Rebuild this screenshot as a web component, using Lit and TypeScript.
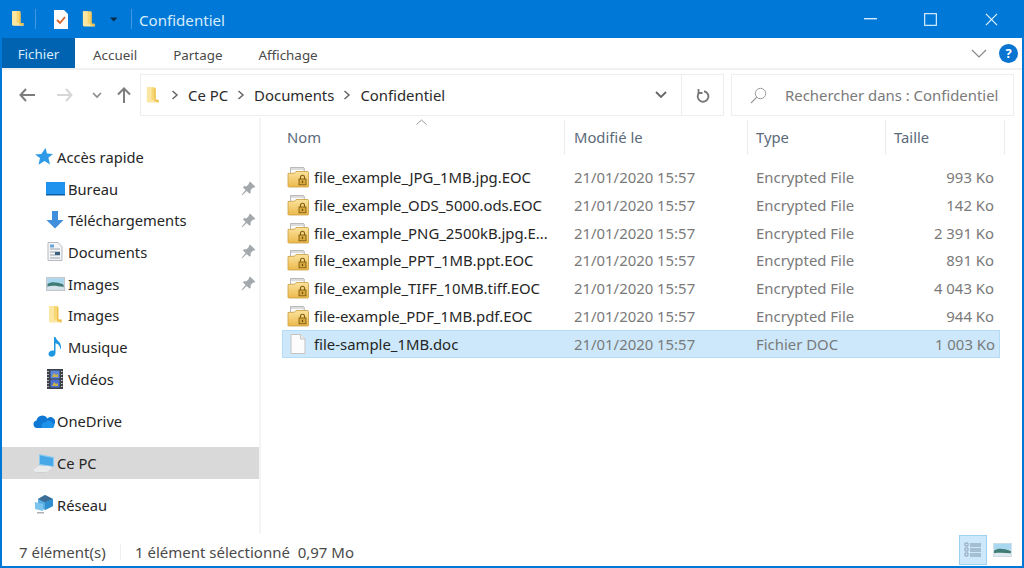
import { LitElement, html, css } from 'lit';
import { customElement } from 'lit/decorators.js';

// small folder standing upright, used in the title bar, address bar and nav pane
const folder = (w = 14, h = 20) => html`<svg width=${w} height=${h} viewBox="0 0 14 20">
  <path d="M1 1h8.500l.8 1v12.500L13.500 17H2l-1-1z" fill="#f7d774"/>
  <path d="M1 1h5v13.500H13.500l.2 3H2l-1-1z" fill="#fbe6a2"/>
  <path d="M9 2.500h1.400V14.500H13.500l.3 3L9 16z" fill="#efc04e"/>
</svg>`;

const pin = html`<svg width="15" height="15" viewBox="0 0 14 14">
  <path d="M8.600 .6l4.800 4.800-1.200 1-.9-.3-2.300 2.300.1 2.400-1.100 1.100-2.600-2.600L1.200 13.400l-.6-.6 3.700-4.300L1.700 5.900l1.100-1.100 2.400.1 2.300-2.300-.3-.9z" fill="#a3a8ac"/>
</svg>`;

const lockedFolder = html`<svg width="22" height="22" viewBox="0 0 22 22">
  <defs><linearGradient id="fy" x1="0" y1="0" x2="0" y2="1"><stop offset="0" stop-color="#fae29c"/><stop offset="1" stop-color="#edb94c"/></linearGradient></defs>
  <path d="M3.500 1.500h13l.8.8V7H3.500z" fill="#dcdcdc" stroke="#a2a2a2" stroke-width=".7"/>
  <path d="M4 4h12.500v3.500H4z" fill="#fafafa"/>
  <path d="M1 7.500l6.700-.3 1.300-1.700h12l.5.8v14.200l-.5.500H1.500l-.5-.5z" fill="url(#fy)" stroke="#c99e3c" stroke-width=".8"/>
  <rect x="12" y="13" width="7" height="5.800" fill="#d9a93c" stroke="#7d5c16" stroke-width=".9"/>
  <path d="M13.500 13v-1.800a2 2 0 0 1 4 0V13" fill="none" stroke="#7d5c16" stroke-width="1.100"/>
  <rect x="14.900" y="14.800" width="1.200" height="2.200" fill="#6f5012"/>
</svg>`;

const docFile = html`<svg width="16" height="20" viewBox="0 0 16 20">
  <path d="M1 .5h9.500l4.500 4.500v14.500H1z" fill="#fcfcfc" stroke="#c4c4c4"/>
  <path d="M10.500 .5v4.500h4.500" fill="#f0f0f0" stroke="#c4c4c4"/>
</svg>`;

const navIcons: Record<string, unknown> = {
  star: html`<svg width="18" height="18" viewBox="0 0 18 18"><path d="M10.500 0l1.500 5.500 6 .5-4.600 3.800 1.600 6.700-5.500-3.500-6 3.700L5 10 0 6.500l6.300-.5z" fill="#2d9be8"/></svg>`,
  desktop: html`<svg width="19" height="14" viewBox="0 0 19 14"><rect width="19" height="13" fill="#1f93ee"/><rect y="12" width="19" height="1.500" fill="#0b5fa5"/></svg>`,
  download: html`<svg width="18" height="18" viewBox="0 0 18 18"><path d="M6 0h6v9h5.500L9 17.500.5 9H6z" fill="#3f8fdd"/></svg>`,
  docs: html`<svg width="16" height="19" viewBox="0 0 16 19"><path d="M1 .5h10l4 4v14H1z" fill="#f4f5f6" stroke="#b5bac0"/><path d="M3 7h10M3 10h10M3 13h10M3 16h10" stroke="#9aa4ae"/><rect x="3" y="2.500" width="4" height="3" fill="#6ba6da"/><rect x="8" y="10" width="5" height="3" fill="#3a5f80"/></svg>`,
  pictures: html`<svg width="19" height="14" viewBox="0 0 19 14"><rect x=".5" y=".5" width="18" height="13" fill="#ccd9e6" stroke="#c3c8cd"/><rect x="1.500" y="1.500" width="16" height="5" fill="#a8d8f0"/><path d="M1.500 7c4-2.500 9-2 16 .5v3h-16z" fill="#3f7c76"/><path d="M1.500 9.500c5-1.500 10-.5 16 .500v2.500h-16z" fill="#d6e3ea"/></svg>`,
  music: html`<svg width="16" height="20" viewBox="0 0 16 20"><path d="M7 0h1.500c.5 3.500 5.500 4.500 5.500 10 0 1-.3 2-.8 2.800.4-3.800-2.200-5.800-4.700-6.500V16c0 2.200-1.900 3.800-4 3.800C3.100 19.800 1.500 18.800 1.500 17c0-2 2-3.500 4-3.500.6 0 1.100.1 1.500.3z" fill="#1c97e0"/></svg>`,
  video: html`<svg width="16" height="20" viewBox="0 0 16 20"><rect width="16" height="20" fill="#3c4048"/><rect x="3.500" y="1.500" width="9" height="8" fill="#5c86d8"/><rect x="3.500" y="10.500" width="9" height="8" fill="#4a70d0"/><path d="M5 8l2-4 2 2 2-1v3z" fill="#c8b04a"/><path d="M5 17l2-4 2 2 2-1v3z" fill="#c8b04a"/><path d="M1 2v1M1 5v1M1 8v1M1 11v1M1 14v1M1 17v1M14.800 2v1M14.800 5v1M14.800 8v1M14.800 11v1M14.800 14v1M14.800 17v1" stroke="#e4e4e4" stroke-width="1.300"/></svg>`,
  cloud: html`<svg width="22" height="14" viewBox="0 0 22 14"><path d="M4 14A3.800 3.800 0 0 1 3.500 6.500 6 6 0 0 1 14.500 4.500 4.500 4.500 0 0 1 21.500 10c0 2.500-1.800 4-4 4z" fill="#0f78d4"/><path d="M9 14c-1.500-3 .5-6 3.500-5.700C14.500 5.800 19 6.500 19.500 9.500c1.800.2 2.500 3.500.2 4.500z" fill="#1f93e8"/></svg>`,
  pc: html`<svg width="22" height="20" viewBox="0 0 22 20"><path d="M6 1l15 3v10L6 12z" fill="#8ccbf0"/><path d="M7 2.500l13 2.600v8L7 11z" fill="#46a8e6"/><path d="M0 17l6-4h10l3 2-6 4.500H3z" fill="#e9ebec"/><path d="M3 19.500h10l.5-.5H3z" fill="#bcbfc2"/></svg>`,
  net: html`<svg width="20" height="20" viewBox="0 0 20 20"><path d="M11 0l8 4v7l-8 4-7-3V4z" fill="#58aee3"/><path d="M11 0l8 4-8 3.500L4 4z" fill="#3d6f96"/><path d="M11 7.500l8-3.500v7l-8 4z" fill="#2f8fd1"/><path d="M1 7l8 2v7l-8-2z" fill="#7cc3ed"/><path d="M3 17h7v1.500H3z" fill="#aab0b5"/></svg>`,
};

type NavItem = { label: string; icon: unknown; pinned?: boolean; sub?: boolean; active?: boolean; gapBefore?: boolean };

const navItems: NavItem[] = [
  { label: 'Accès rapide', icon: navIcons.star },
  { label: 'Bureau', icon: navIcons.desktop, sub: true, pinned: true },
  { label: 'Téléchargements', icon: navIcons.download, sub: true, pinned: true },
  { label: 'Documents', icon: navIcons.docs, sub: true, pinned: true },
  { label: 'Images', icon: navIcons.pictures, sub: true, pinned: true },
  { label: 'Images', icon: folder(), sub: true },
  { label: 'Musique', icon: navIcons.music, sub: true },
  { label: 'Vidéos', icon: navIcons.video, sub: true },
  { label: 'OneDrive', icon: navIcons.cloud, gapBefore: true },
  { label: 'Ce PC', icon: navIcons.pc, active: true, gapBefore: true },
  { label: 'Réseau', icon: navIcons.net, gapBefore: true },
];

const files = [
  ['file_example_JPG_1MB.jpg.EOC', 'Encrypted File', '993 Ko'],
  ['file_example_ODS_5000.ods.EOC', 'Encrypted File', '142 Ko'],
  ['file_example_PNG_2500kB.jpg.E...', 'Encrypted File', '2 391 Ko'],
  ['file_example_PPT_1MB.ppt.EOC', 'Encrypted File', '891 Ko'],
  ['file_example_TIFF_10MB.tiff.EOC', 'Encrypted File', '4 043 Ko'],
  ['file-example_PDF_1MB.pdf.EOC', 'Encrypted File', '944 Ko'],
  ['file-sample_1MB.doc', 'Fichier DOC', '1 003 Ko'],
];

@customElement('app-root')
export class AppRoot extends LitElement {
  static styles = css`
    :host {
      display: flex;
      flex-direction: column;
      width: 1024px;
      height: 568px;
      box-sizing: border-box;
      border: 2px solid #0078d7;
      border-top: 0;
      background: #fff;
      overflow: hidden;
      font-family: 'Noto Sans', sans-serif;
      font-size: 14.9px;
      color: #2b2b2b;
    }

    .title {
      flex: none;
      height: 38px;
      margin: 0 -2px;
      background: #0078d7;
      display: flex;
      align-items: center;
      color: #d6ecfb;
    }
    .title .ic { display: flex; }
    .qa { padding: 0 0 0 11px; display: flex; align-items: center; }
    .sep { width: 1px; height: 20px; background: #3f98e0; }
    .caption { font-size: 15.100px; margin-left: 7px; flex: 1; padding-top: 2px; }
    .wbtn { width: 46px; display: flex; justify-content: center; margin-left: 14.500px; }

    .tabs {
      flex: none;
      height: 30px;
      display: flex;
      align-items: center;
      font-size: 13.400px;
      color: #4a4a4a;
      border-bottom: 2px solid #f0f0f0;
    }
    .tab { margin-left: 36px; margin-top: 3px; }
    .tab.file {
      margin: 0;
      width: 73px;
      height: 30px;
      padding-top: 1px;
      box-sizing: border-box;
      background: #0063b1;
      color: #d9ecfa;
      display: flex;
      align-items: center;
      justify-content: center;
    }
    .tabs .end { margin-left: auto; display: flex; align-items: center; gap: 12px; padding-right: 4px; }
    .help {
      width: 19px;
      height: 19px;
      border-radius: 50%;
      background: #0a74d1;
      color: #fff;
      font-size: 13px;
      font-weight: 700;
      text-align: center;
      line-height: 19px;
    }

    .nav {
      flex: none;
      height: 48px;
      display: flex;
      align-items: center;
      padding: 2px 8px 0 0;
      box-sizing: border-box;
    }
    .arrows { display: flex; align-items: center; width: 138px; flex: none; padding-left: 17px; box-sizing: border-box; }
    .box {
      height: 42px;
      box-sizing: border-box;
      border: 1px solid #eeeeee;
      display: flex;
      align-items: center;
    }
    .addr { width: 584px; flex: none; }
    .crumbs { flex: 1; display: flex; align-items: center; padding-left: 5px; }
    .crumbs .chev { margin: 0 9px 0 9px; display: flex; }
    .addr .drop { width: 41px; display: flex; justify-content: center; }
    .addr .refresh {
      width: 41px;
      height: 100%;
      display: flex;
      align-items: center;
      justify-content: center;
      border-left: 1px solid #eeeeee;
    }
    .search {
      flex: 1;
      margin-left: 7px;
      padding-left: 18px;
      color: #7a7a7a;
      gap: 18px;
    }

    .main { flex: 1; display: flex; min-height: 0; }
    .side {
      width: 259px;
      flex: none;
      box-sizing: border-box;
      padding-top: 23px;
      border-right: 2px solid #f4f4f4;
      color: #262626;
      font-size: 14.700px;
    }
    .item {
      height: 31.700px;
      display: flex;
      align-items: center;
      padding-left: 31px;
      width: 257px;
      box-sizing: border-box;
    }
    .item.sub { padding-left: 42px; }
    .item.gap { margin-top: 10.500px; }
    .item.active { background: #d9d9d9; }
    .item .ico { width: 22px; display: flex; justify-content: center; margin-right: 2px; flex: none; }
    .item .pin { margin-left: auto; margin-right: 3px; display: flex; }

    .list { flex: 1; padding: 2px 4px 0 21px; min-width: 0; position: relative; }
    .head {
      display: grid;
      grid-template-columns: 283px 183px 138px 119px;
      height: 35px;
      color: #5b6a7a;
      font-size: 14.800px;
      position: relative;
    }
    .head div { padding: 7px 0 0 8px; border-right: 1px solid #ececec; }
    .head div:first-of-type { padding-left: 5px; }
    .head div:nth-of-type(2) { padding-left: 9px; }
    .sort { position: absolute; left: 134px; top: -1px; }
    .rows { padding-top: 8.500px; }
    .row {
      display: grid;
      grid-template-columns: 284px 182px 138px 114px;
      width: 718px;
      height: 27.700px;
      align-items: center;
      color: #7a7a7a;
      box-sizing: border-box;
    }
    .row.sel { background: #cce8fa; border: 1px solid #b4dcf5; margin-top: .5px; }
    .row .name { display: flex; align-items: center; color: #262626; padding-left: 5px; gap: 5px; white-space: nowrap; }
    .row.sel .name { padding-left: 4px; }
    .row .name .ico { width: 22px; display: flex; justify-content: center; flex: none; }
    .row > div:not(.name) { padding-left: 8px; }
    .row.sel > div:not(.name):not(.size) { padding-left: 7px; }
    .row .size { text-align: right; padding-right: 6px; }

    .status {
      flex: none;
      height: 32px;
      display: flex;
      align-items: center;
      font-size: 15px;
      color: #4a4a4a;
      padding-left: 17px;
    }
    .status .s1 { width: 116px; display: flex; align-items: center; padding-top: 3px; }
    .status .s2 { padding-top: 3px; }
    .status .bar { width: 1px; height: 16px; background: #efefef; margin: 3px 14px 0 -15px; }
    .status .views { margin-left: auto; display: flex; align-items: center; height: 100%; padding-right: 6px; }
    .vbtn { width: 28px; height: 30px; display: flex; align-items: center; justify-content: center; box-sizing: border-box; }
    .vbtn.on { background: #cce8fa; border: 1px solid #9fd2f2; }
  `;

  private _nav(it: NavItem) {
    const cls = ['item', it.sub ? 'sub' : '', it.active ? 'active' : '', it.gapBefore ? 'gap' : ''].join(' ');
    return html`<div class=${cls}>
      <span class="ico">${it.icon}</span>
      <span>${it.label}</span>
      ${it.pinned ? html`<span class="pin">${pin}</span>` : ''}
    </div>`;
  }

  render() {
    const chev = html`<svg width="8" height="10" viewBox="0 0 8 10"><path d="M1.500 1L6 5 1.500 9" fill="none" stroke="#666" stroke-width="1.500"/></svg>`;
    return html`
      <div class="title">
        <div class="qa">
          <span class="ic">${folder(13, 18)}</span>
          <span class="sep" style="margin:0 18px 0 11px"></span>
          <span class="ic"><svg width="14" height="20" viewBox="0 0 14 20"><path d="M0 1h10l4 4v15H0z" fill="#fbfbfb"/><path d="M3 11l3 3 5-6" fill="none" stroke="#d9622b" stroke-width="1.800"/></svg></span>
          <span class="ic" style="margin-left:14px">${folder(13, 19)}</span>
          <span class="ic" style="margin:0 13px 0 15px"><svg width="8" height="5" viewBox="0 0 8 5"><path d="M0 .5h7.500L3.700 4.500z" fill="#0a2a44"/></svg></span>
          <span class="sep"></span>
        </div>
        <span class="caption">Confidentiel</span>
        <span class="wbtn"><svg width="13" height="2" viewBox="0 0 13 2"><rect width="13" height="1.400" fill="#d6ecfb"/></svg></span>
        <span class="wbtn"><svg width="13" height="13" viewBox="0 0 14 14"><rect x=".7" y=".7" width="12.600" height="12.600" fill="none" stroke="#d6ecfb" stroke-width="1.300"/></svg></span>
        <span class="wbtn" style="margin-right:10px"><svg width="13" height="13" viewBox="0 0 14 14"><path d="M1 1l12 12M13 1L1 13" stroke="#e4f2fc" stroke-width="1.300"/></svg></span>
      </div>

      <div class="tabs">
        <span class="tab file">Fichier</span>
        <span class="tab" style="margin-left:18px">Accueil</span>
        <span class="tab">Partage</span>
        <span class="tab">Affichage</span>
        <span class="end">
          <svg width="16" height="9" viewBox="0 0 16 9"><path d="M1 1l7 7 7-7" fill="none" stroke="#888" stroke-width="1.200"/></svg>
          <span class="help">?</span>
        </span>
      </div>

      <div class="nav">
        <div class="arrows">
          <svg width="16" height="14" viewBox="0 0 16 14"><path d="M7 1L1.500 7 7 13M2 7h14" fill="none" stroke="#7d7d7d" stroke-width="2"/></svg>
          <svg style="margin-left:22px" width="16" height="14" viewBox="0 0 16 14"><path d="M9 1l5.500 6L9 13M14 7H0" fill="none" stroke="#d6d6d6" stroke-width="2"/></svg>
          <svg style="margin-left:19px" width="10" height="7" viewBox="0 0 10 7"><path d="M1 1l4 4 4-4" fill="none" stroke="#8a8a8a" stroke-width="1.600"/></svg>
          <svg style="margin-left:15px" width="14" height="16" viewBox="0 0 14 16"><path d="M1 7.500L7 1.500l6 6M7 2v14" fill="none" stroke="#7d7d7d" stroke-width="2"/></svg>
        </div>
        <div class="box addr">
          <div class="crumbs">
            ${folder(13, 19)}
            <span class="chev" style="margin-left:12px">${chev}</span><span>Ce PC</span>
            <span class="chev">${chev}</span><span>Documents</span>
            <span class="chev">${chev}</span><span>Confidentiel</span>
          </div>
          <span class="drop"><svg width="12" height="8" viewBox="0 0 12 8"><path d="M1 1l5 5 5-5" fill="none" stroke="#666" stroke-width="1.800"/></svg></span>
          <span class="refresh"><svg width="14" height="15" viewBox="0 0 14 15"><path d="M2.500 1v4h4" fill="none" stroke="#777" stroke-width="1.800"/><path d="M8 3.200A5.300 5.300 0 1 1 3 5" fill="none" stroke="#777" stroke-width="1.900"/></svg></span>
        </div>
        <div class="box search">
          <svg width="17" height="17" viewBox="0 0 17 17"><circle cx="10.500" cy="6.500" r="5.200" fill="none" stroke="#9a9a9a"/><path d="M6.800 10.200L1 16" stroke="#9a9a9a" stroke-width="1.200"/></svg>
          <span>Rechercher dans : Confidentiel</span>
        </div>
      </div>

      <div class="main">
        <div class="side">${navItems.map((it) => this._nav(it))}</div>
        <div class="list">
          <div class="head">
            <svg class="sort" width="11" height="6" viewBox="0 0 11 6"><path d="M.5 5.500L5.500 1l5 4.500" fill="none" stroke="#9a9a9a"/></svg>
            <div>Nom</div><div>Modifié le</div><div>Type</div><div>Taille</div>
          </div>
          <div class="rows">
            ${files.map(([name, type, size], i) => html`
              <div class="row ${i === 6 ? 'sel' : ''}">
                <div class="name"><span class="ico">${i === 6 ? docFile : lockedFolder}</span>${name}</div>
                <div>21/01/2020 15:57</div>
                <div>${type}</div>
                <div class="size">${size}</div>
              </div>`)}
          </div>
        </div>
      </div>

      <div class="status">
        <span class="s1">7 élément(s)</span>
        <span class="bar"></span>
        <span class="s2">1 élément sélectionné&nbsp; 0,97 Mo</span>
        <span class="views">
          <span class="vbtn on"><svg width="18" height="18" viewBox="0 0 18 18"><path d="M1 2h3v3H1zM1 7h3v3H1zM1 12h3v3H1z" fill="none" stroke="#8fa3b5"/><path d="M6 3h11M6 5h11M6 8h11M6 10h11M6 13h11M6 15h11" stroke="#7f94a8"/></svg></span>
          <span class="vbtn" style="margin-left:1px"><svg width="19" height="14" viewBox="0 0 20 15"><rect width="20" height="15" fill="#cbdbe8"/><rect x="1" y="1" width="18" height="6" fill="#a8d8f0"/><path d="M1 8c5-3 10-2 18 .5V11H1z" fill="#3f7c76"/><path d="M1 11c6-1 12-.5 18 .5V14H1z" fill="#dfe8ee"/></svg></span>
        </span>
      </div>
    `;
  }
}
